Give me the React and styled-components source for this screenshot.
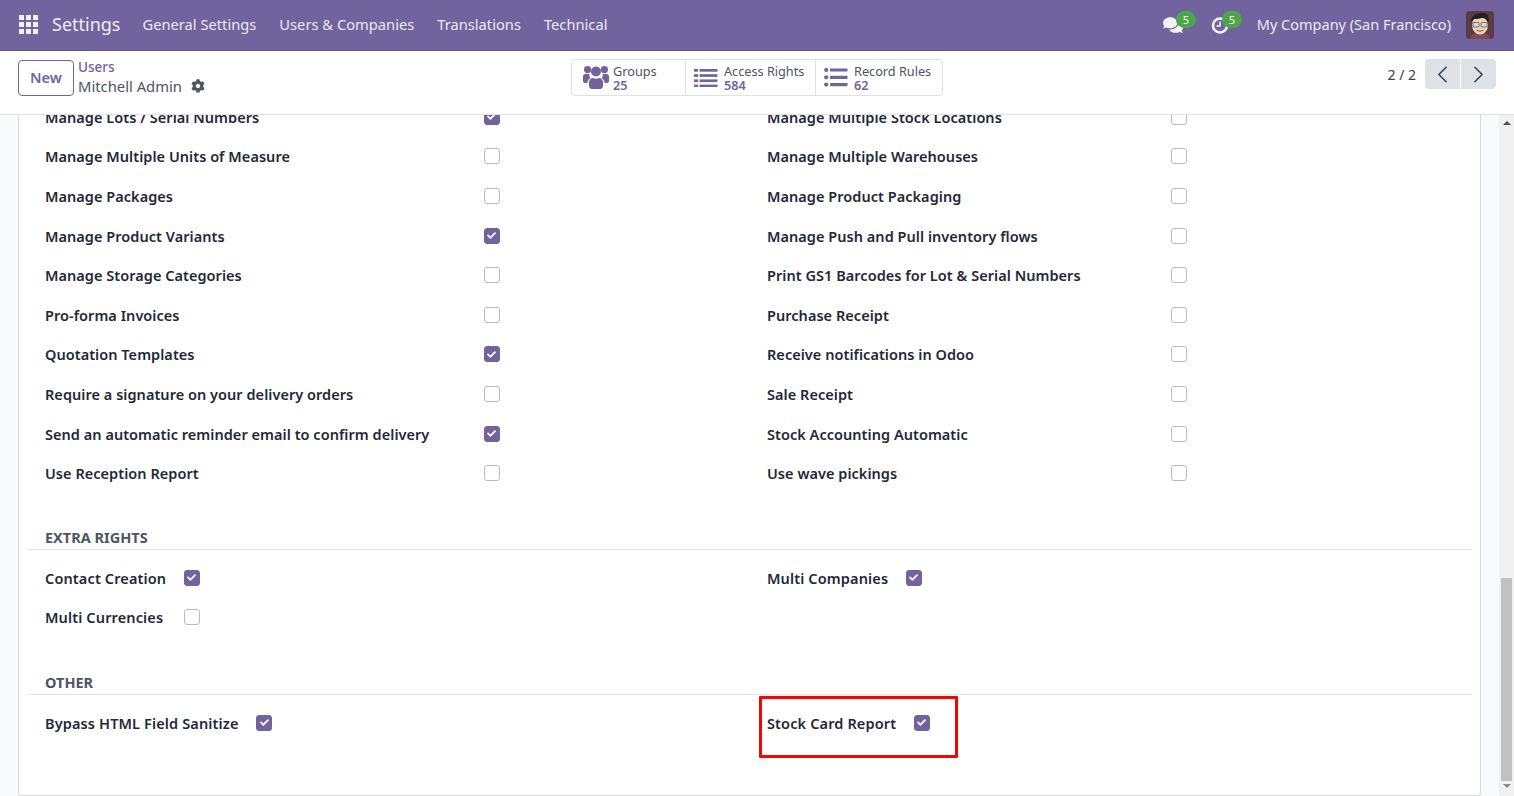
import React from "react";
import styled, { createGlobalStyle } from "styled-components";
import { FaCog, FaComments, FaCheck } from "react-icons/fa";
import { LuChevronLeft, LuChevronRight } from "react-icons/lu";

const purple = "#71639e";

const Global = createGlobalStyle`
	html, body {
		margin: 0;
		height: 100%;
		overflow: hidden;
		font-family: "Noto Sans", "Open Sans", sans-serif;
		color: #374151;
	}
	#root { height: 100%; }
`;

const Page = styled.div`
	height: 796px;
	display: flex;
	flex-direction: column;
	overflow: hidden;
`;

const Navbar = styled.header`
	height: 50px;
	flex: none;
	display: flex;
	align-items: center;
	background: ${purple};
	border-bottom: 1px solid #5f5389;
	color: #fff;
	padding: 0 20px 0 19px;
`;

const AppsIcon = styled.div`
	display: grid;
	grid-template-columns: repeat(3, 5px);
	grid-auto-rows: 5px;
	gap: 2px;
	margin: -2px 14px 0 0;
	span { background: #f3f1f7; }
`;

const Brand = styled.div`
	font-size: 18px;
	color: #f0eef5;
	margin: -2px 22px 0 0;
`;

const MenuItem = styled.a`
	font-size: 14.7px;
	color: #ece9f2;
	margin: -2px 23px 0 0;
`;

const NavRight = styled.div`
	margin-left: auto;
	display: flex;
	align-items: center;
`;

const Systray = styled.div`
	position: relative;
	width: 20px;
	height: 20px;
	display: flex;
	align-items: center;
	justify-content: center;
	margin-right: ${(p) => p.$gap}px;
`;

const Badge = styled.span`
	position: absolute;
	left: ${(p) => p.$left}px;
	top: -4px;
	width: 20px;
	height: 17px;
	border-radius: 9px;
	background: #4ea64a;
	color: #f4f4e8;
	font-size: 11px;
	line-height: 17px;
	text-align: center;
`;

const CompanyName = styled.span`
	font-size: 14.5px;
	color: #ece9f2;
	margin: -2px 15px 0 0;
`;

const Avatar = styled.div`
	width: 28px;
	height: 28px;
	border-radius: 4px;
	overflow: hidden;
	svg { display: block; }
`;

const ControlPanel = styled.div`
	height: 64px;
	box-sizing: border-box;
	flex: none;
	display: grid;
	grid-template-columns: 1fr auto 1fr;
	align-items: start;
	background: #fff;
	border-bottom: 1px solid #dee2e6;
	padding: 8px 18px 0;
`;

const PanelLeft = styled.div`
	display: flex;
	align-items: flex-start;
	gap: 4px;
`;

const NewButton = styled.button`
	width: 56px;
	height: 36px;
	margin-top: 1px;
	background: #fff;
	border: 1px solid ${purple};
	border-radius: 4px;
	color: ${purple};
	font: 600 14.6px "Noto Sans", sans-serif;
	padding: 0 0 2px;
`;

const Crumbs = styled.div`
	display: flex;
	flex-direction: column;
	margin-top: -1px;
`;

const CrumbLink = styled.a`
	font-size: 13.5px;
	font-weight: 500;
	line-height: 18px;
	color: ${purple};
`;

const CrumbCurrent = styled.div`
	font-size: 14.8px;
	line-height: 20px;
	color: #4b5563;
	display: flex;
	align-items: center;
	gap: 9px;
`;

const StatGroup = styled.div`
	display: flex;
	height: 37px;
	box-sizing: border-box;
	border: 1px solid #dee2e6;
	border-radius: 4px;
`;

const StatButton = styled.div`
	display: flex;
	align-items: center;
	gap: ${(p) => p.$gap}px;
	width: ${(p) => p.$width}px;
	padding-left: ${(p) => p.$pad}px;
	box-sizing: border-box;
	color: ${purple};
	& + & { border-left: 1px solid #dee2e6; }
`;

const StatText = styled.div`
	display: flex;
	flex-direction: column;
	font-size: 12.7px;
	line-height: 14px;
`;

const StatLabel = styled.span`
	color: #4b5563;
`;

const StatValue = styled.span`
	font-weight: 600;
`;

const Pager = styled.div`
	justify-self: end;
	display: flex;
	align-items: center;
`;

const PagerCount = styled.span`
	font-size: 14px;
	color: #374151;
	margin-right: 9px;
`;

const PagerButton = styled.button`
	width: 35px;
	height: 30px;
	border: 0;
	padding: 0;
	background: #dee2e6;
	color: #374151;
	display: flex;
	align-items: center;
	justify-content: center;
	margin-left: ${(p) => (p.$next ? 1 : 0)}px;
	border-radius: ${(p) => (p.$next ? "0 4px 4px 0" : "4px 0 0 4px")};
`;

const Body = styled.div`
	flex: 1;
	min-height: 0;
	display: flex;
	background: #f9fafb;
	overflow: hidden;
`;

const ContentArea = styled.div`
	flex: 1;
	min-width: 0;
	padding: 0 18px;
	overflow: hidden;
`;

const Sheet = styled.div`
	background: #fff;
	border: 1px solid #d8dadd;
	border-top: 0;
	border-radius: 0 0 4px 4px;
	height: 681px;
	box-sizing: border-box;
	overflow: hidden;
	padding: 0 8px;
`;

const ScrollTrack = styled.div`
	width: 15px;
	flex: none;
	background: #f1f1f1;
	display: flex;
	flex-direction: column;
	align-items: center;
`;

const ScrollArrow = styled.div`
	width: 0;
	height: 0;
	border-left: 4px solid transparent;
	border-right: 4px solid transparent;
	border-${(p) => (p.$down ? "top" : "bottom")}: 4px solid ${(p) => (p.$down ? "#8a8a8a" : "#505050")};
	margin: ${(p) => (p.$down ? "3px 0 8px" : "6px 0 0")};
`;

const ScrollThumb = styled.div`
	width: 11px;
	background: #c1c1c1;
	margin-top: auto;
	height: 203px;
`;

const RowsTable = styled.div`
	display: grid;
	grid-template-columns: 722px 1fr;
	margin-top: -18px;
	padding-bottom: 18px;
`;

const Column = styled.div`
	display: grid;
	grid-template-columns: ${(p) => p.$labelWidth}px 16px;
	grid-auto-rows: 39.6px;
	align-items: center;
	padding-left: 18px;
`;

const Label = styled.label`
	font-size: 14.5px;
	font-weight: 600;
	letter-spacing: 0.04px;
	color: #1f2937;
	white-space: nowrap;
`;

const Box = styled.span`
	box-sizing: border-box;
	width: 16px;
	height: 16px;
	border-radius: 3px;
	display: flex;
	align-items: center;
	justify-content: center;
	color: #fff;
	background: ${(p) => (p.$on ? purple : "#fff")};
	border: 1px solid ${(p) => (p.$on ? purple : "#b9bcc0")};
`;

const SectionTitle = styled.h3`
	margin: 0;
	font-size: 14.5px;
	line-height: 19px;
	font-weight: 700;
	color: #4b5563;
	padding: 0 0 2px 18px;
	border-bottom: 1px solid #e5e7eb;
`;

const Section = styled.section`
	margin-top: ${(p) => p.$top}px;
`;

const PairGrid = styled.div`
	display: grid;
	grid-template-columns: 722px 1fr;
	padding-top: 8px;
`;

const InlineColumn = styled.div`
	display: grid;
	grid-template-columns: max-content 16px;
	column-gap: 17.5px;
	grid-auto-rows: 39.6px;
	align-items: center;
	align-content: start;
	padding-left: 18px;
	position: relative;
	${Label} { letter-spacing: 0.13px; }
`;

const Highlight = styled.div`
	position: absolute;
	left: 10px;
	top: -7px;
	width: 199px;
	height: 62px;
	box-sizing: border-box;
	border: 3px solid #f00;
	border-radius: 1px;
	pointer-events: none;
`;

const leftRows = [
	["Manage Lots / Serial Numbers", true],
	["Manage Multiple Units of Measure", false],
	["Manage Packages", false],
	["Manage Product Variants", true],
	["Manage Storage Categories", false],
	["Pro-forma Invoices", false],
	["Quotation Templates", true],
	["Require a signature on your delivery orders", false],
	["Send an automatic reminder email to confirm delivery", true],
	["Use Reception Report", false],
];

const rightRows = [
	["Manage Multiple Stock Locations", false],
	["Manage Multiple Warehouses", false],
	["Manage Product Packaging", false],
	["Manage Push and Pull inventory flows", false],
	["Print GS1 Barcodes for Lot & Serial Numbers", false],
	["Purchase Receipt", false],
	["Receive notifications in Odoo", false],
	["Sale Receipt", false],
	["Stock Accounting Automatic", false],
	["Use wave pickings", false],
];

const Check = ({ on }) => (
	<Box $on={on}>{on && <FaCheck size={9} />}</Box>
);

const Rows = ({ rows }) =>
	rows.map(([label, on]) => (
		<React.Fragment key={label}>
			<Label>{label}</Label>
			<Check on={on} />
		</React.Fragment>
	));

const GroupsIcon = () => (
	<svg width="26" height="25" viewBox="0 0 26 25" fill="currentColor">
		<circle cx="4.6" cy="4.6" r="3.6" />
		<circle cx="21.4" cy="4.6" r="3.6" />
		<circle cx="13" cy="6.5" r="5" />
		<path d="M0 11.5C0 9.5 1.5 9 3 9h3.5c-.6 1.5 0 3 1 4-2 1-3 3-3 5H2c-1.2 0-2-.8-2-2z" />
		<path d="M26 11.5c0-2-1.5-2.5-3-2.5h-3.5c.6 1.5 0 3-1 4 2 1 3 3 3 5H24c1.2 0 2-.8 2-2z" />
		<path d="M6 17.5c0-3 2-4.500 4-4.500 1.800 1 4.200 1 6 0 2 0 4 1.500 4 4.500v3.500c0 1.800-1.500 3-3 3H9c-1.500 0-3-1.200-3-3z" />
	</svg>
);

const AccessIcon = () => (
	<svg width="24" height="18" viewBox="0 0 24 18" fill="currentColor">
		{[0, 5.2, 10.4, 15.6].map((y) => (
			<React.Fragment key={y}>
				<rect x="0" y={y} width="4" height="2.7" />
				<rect x="5.500" y={y} width="18" height="2.7" />
			</React.Fragment>
		))}
	</svg>
);

const RulesIcon = () => (
	<svg width="24" height="19" viewBox="0 0 24 19" fill="currentColor">
		{[2, 9.3, 16.6].map((y) => (
			<React.Fragment key={y}>
				<circle cx="2.2" cy={y} r="2.100" />
				<rect x="6" y={y - 1.6} width="17.500" height="3.200" rx="0.400" />
			</React.Fragment>
		))}
	</svg>
);

const ActivityIcon = () => (
	<svg width="18" height="18" viewBox="0 0 18 18" fill="none" stroke="#f3f1f7">
		<circle cx="9" cy="9.5" r="7" strokeWidth="2.6" />
		<path d="M9 5.500V10H5.500" strokeWidth="1.600" />
	</svg>
);

const AvatarPic = () => (
	<svg width="28" height="28" viewBox="0 0 28 28">
		<rect width="28" height="28" fill="#5c3a48" />
		<path d="M4 28c1-5 5-7 10-7s9 2 10 7z" fill="#7d4a5c" />
		<ellipse cx="14" cy="14" rx="8" ry="9.500" fill="#f3d3b5" />
		<path d="M5 11c0-6 4-9 11-9 3 0 6 1 6 3 1 2 1 4 0 7-1-3-3-5-6-5-3 1-7 1-8 1-1 1-2 2-3 3z" fill="#22201f" />
		<rect x="7" y="11.500" width="6" height="4.500" rx="1" fill="#d9d9d9" stroke="#555" strokeWidth="0.800" />
		<rect x="15" y="11.500" width="6" height="4.500" rx="1" fill="#d9d9d9" stroke="#555" strokeWidth="0.800" />
		<path d="M10.500 19c2 1.500 5 1.500 7 0" stroke="#8a4a3a" strokeWidth="1" fill="none" />
	</svg>
);

export default function App() {
	return (
		<Page>
			<Global />
			<Navbar>
				<AppsIcon>
					{Array.from({ length: 9 }).map((_, i) => (
						<span key={i} />
					))}
				</AppsIcon>
				<Brand>Settings</Brand>
				<MenuItem>General Settings</MenuItem>
				<MenuItem>Users &amp; Companies</MenuItem>
				<MenuItem>Translations</MenuItem>
				<MenuItem>Technical</MenuItem>
				<NavRight>
					<Systray $gap={27}>
						<FaComments size={20} color="#f3f1f7" />
						<Badge $left={13}>5</Badge>
					</Systray>
					<Systray $gap={27}>
						<ActivityIcon />
						<Badge $left={12}>5</Badge>
					</Systray>
					<CompanyName>My Company (San Francisco)</CompanyName>
					<Avatar>
						<AvatarPic />
					</Avatar>
				</NavRight>
			</Navbar>
			<ControlPanel>
				<PanelLeft>
					<NewButton>New</NewButton>
					<Crumbs>
						<CrumbLink>Users</CrumbLink>
						<CrumbCurrent>
							Mitchell Admin <FaCog size={14} />
						</CrumbCurrent>
					</Crumbs>
				</PanelLeft>
				<StatGroup>
					<StatButton $width={113} $pad={11} $gap={4}>
						<GroupsIcon />
						<StatText>
							<StatLabel>Groups</StatLabel>
							<StatValue>25</StatValue>
						</StatText>
					</StatButton>
					<StatButton $width={130} $pad={8} $gap={6}>
						<AccessIcon />
						<StatText>
							<StatLabel>Access Rights</StatLabel>
							<StatValue>584</StatValue>
						</StatText>
					</StatButton>
					<StatButton $width={127} $pad={8} $gap={6}>
						<RulesIcon />
						<StatText>
							<StatLabel>Record Rules</StatLabel>
							<StatValue>62</StatValue>
						</StatText>
					</StatButton>
				</StatGroup>
				<Pager>
					<PagerCount>2 / 2</PagerCount>
					<PagerButton>
						<LuChevronLeft size={29} strokeWidth={1.3} />
					</PagerButton>
					<PagerButton $next>
						<LuChevronRight size={29} strokeWidth={1.3} />
					</PagerButton>
				</Pager>
			</ControlPanel>
			<Body>
				<ContentArea>
					<Sheet>
						<RowsTable>
							<Column $labelWidth={438.5}>
								<Rows rows={leftRows} />
							</Column>
							<Column $labelWidth={403.5}>
								<Rows rows={rightRows} />
							</Column>
						</RowsTable>
						<Section $top={17}>
							<SectionTitle>EXTRA RIGHTS</SectionTitle>
							<PairGrid>
								<InlineColumn>
									<Rows rows={[["Contact Creation", true], ["Multi Currencies", false]]} />
								</InlineColumn>
								<InlineColumn>
									<Rows rows={[["Multi Companies", true]]} />
								</InlineColumn>
							</PairGrid>
						</Section>
						<Section $top={36}>
							<SectionTitle>OTHER</SectionTitle>
							<PairGrid>
								<InlineColumn>
									<Rows rows={[["Bypass HTML Field Sanitize", true]]} />
								</InlineColumn>
								<InlineColumn>
									<Rows rows={[["Stock Card Report", true]]} />
									<Highlight />
								</InlineColumn>
							</PairGrid>
						</Section>
					</Sheet>
				</ContentArea>
				<ScrollTrack>
					<ScrollArrow />
					<ScrollThumb />
					<ScrollArrow $down />
				</ScrollTrack>
			</Body>
		</Page>
	);
}
